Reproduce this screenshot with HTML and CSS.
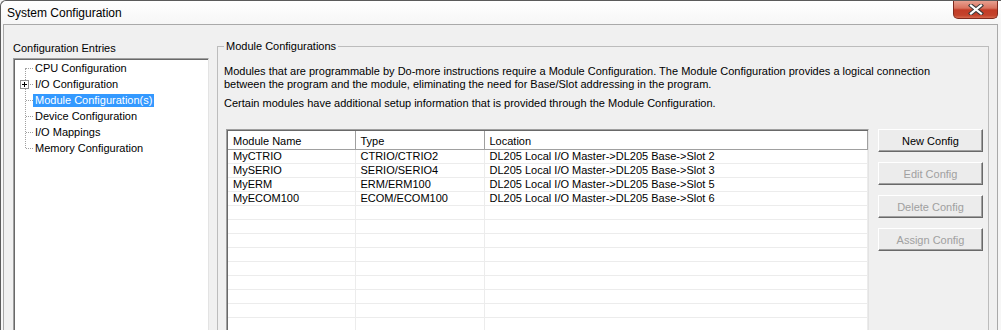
FILE: index.html
```html
<!DOCTYPE html>
<html lang="en">
    <head>
        <meta charset="utf-8">
        <title>System Configuration</title>
        <link rel="stylesheet" href="styles.css">
    </head>
    <body>
        <div class="window">
            <div class="titlebar">
                <span class="title">System Configuration</span>
                <span class="close">
                    <svg width="16" height="11" viewBox="0 0 16 11">
                        <path d="M3 1.5 L13 9.5 M13 1.5 L3 9.5" stroke="#3a3a3a" stroke-width="4.2" stroke-linecap="square"/>
                        <path d="M3 1.5 L13 9.5 M13 1.5 L3 9.5" stroke="#fff" stroke-width="2.2" stroke-linecap="square"/>
                    </svg>
                </span>
            </div>

            <div class="client">
                <div class="entries">
                    <div class="entries-label">Configuration Entries</div>
                    <div class="tree-box">
                        <ul class="tree">
                            <li><span class="tree-label">CPU Configuration</span></li>
                            <li>
                                <span class="expander">
                                    <svg width="9" height="9" viewBox="0 0 9 9">
                                        <rect x="0.5" y="0.5" width="8" height="8" fill="#fff" stroke="#919191"/>
                                        <path d="M2 4.5 H7 M4.5 2 V7" stroke="#000"/>
                                    </svg>
                                </span>
                                <span class="tree-label">I/O Configuration</span>
                            </li>
                            <li><span class="tree-label selected">Module Configuration(s)</span></li>
                            <li><span class="tree-label">Device Configuration</span></li>
                            <li><span class="tree-label">I/O Mappings</span></li>
                            <li><span class="tree-label">Memory Configuration</span></li>
                        </ul>
                    </div>
                </div>

                <fieldset class="group">
                    <legend>Module Configurations</legend>
                    <p>Modules that are programmable by Do-more instructions require a Module Configuration. The Module Configuration provides a logical connection between the program and the module, eliminating the need for Base/Slot addressing in the program.</p>
                    <p class="second">Certain modules have additional setup information that is provided through the Module Configuration.</p>

                    <div class="group-body">
                        <div class="list">
                            <table>
                                <colgroup>
                                    <col class="col-name">
                                    <col class="col-type">
                                    <col>
                                </colgroup>
                                <thead>
                                    <tr><th>Module Name</th><th>Type</th><th>Location</th></tr>
                                </thead>
                                <tbody>
                                    <tr><td>MyCTRIO</td><td>CTRIO/CTRIO2</td><td>DL205 Local I/O Master-&gt;DL205 Base-&gt;Slot 2</td></tr>
                                    <tr><td>MySERIO</td><td>SERIO/SERIO4</td><td>DL205 Local I/O Master-&gt;DL205 Base-&gt;Slot 3</td></tr>
                                    <tr><td>MyERM</td><td>ERM/ERM100</td><td>DL205 Local I/O Master-&gt;DL205 Base-&gt;Slot 5</td></tr>
                                    <tr><td>MyECOM100</td><td>ECOM/ECOM100</td><td>DL205 Local I/O Master-&gt;DL205 Base-&gt;Slot 6</td></tr>
                                    <tr><td></td><td></td><td></td></tr>
                                    <tr><td></td><td></td><td></td></tr>
                                    <tr><td></td><td></td><td></td></tr>
                                    <tr><td></td><td></td><td></td></tr>
                                    <tr><td></td><td></td><td></td></tr>
                                    <tr><td></td><td></td><td></td></tr>
                                    <tr><td></td><td></td><td></td></tr>
                                    <tr><td></td><td></td><td></td></tr>
                                    <tr><td></td><td></td><td></td></tr>
                                    <tr><td></td><td></td><td></td></tr>
                                    <tr><td></td><td></td><td></td></tr>
                                    <tr><td></td><td></td><td></td></tr>
                                    <tr><td></td><td></td><td></td></tr>
                                </tbody>
                            </table>
                        </div>
                        <div class="buttons">
                            <button class="btn">New Config</button>
                            <button class="btn" disabled>Edit Config</button>
                            <button class="btn" disabled>Delete Config</button>
                            <button class="btn" disabled>Assign Config</button>
                        </div>
                    </div>
                </fieldset>
            </div>
        </div>
    </body>
</html>
```

FILE: styles.css
```css
html,
body {
    margin: 0;
    height: 100%;
    overflow: hidden;
}

body {
    font-family: "Liberation Sans", Arial, sans-serif;
    font-size: 11px;
    color: #000;
    background: #f5f5f5;
}

.window {
    height: 330px;
    display: flex;
    flex-direction: column;
    border-left: 1px solid #5b5b5b;
    border-top: 1px solid #5b5b5b;
    border-radius: 6px 0 0 0;
    background: #f6f6f6;
    overflow: hidden;
}

/* title bar */
.titlebar {
    height: 23px;
    flex: none;
    display: flex;
    align-items: flex-start;
    padding-left: 6px;
    background: linear-gradient(#ffffff, #f6f6f6);
    border-radius: 6px 0 0 0;
}

.title {
    font-size: 12px;
    line-height: 14px;
    margin-top: 5px;
}

.close {
    margin-left: auto;
    margin-right: 3px;
    margin-top: -1px;
    width: 43px;
    height: 18px;
    display: flex;
    align-items: center;
    justify-content: center;
    border: 1px solid #7e2a1e;
    border-top: none;
    border-radius: 0 0 5px 5px;
    background: linear-gradient(#e9a697 0%, #d9735f 45%, #c23c27 55%, #c4432c 85%, #d66a4f 100%);
}

/* client area */
.client {
    flex: 1;
    display: flex;
    gap: 8px;
    margin: 0 3px 0 2px;
    padding: 15px 8px 0 9px;
    border: 1px solid #a9a9a9;
    border-bottom: none;
    background: #f0f0f0;
    min-height: 0;
}

.entries {
    width: 196px;
    flex: none;
    display: flex;
    flex-direction: column;
}

.entries-label {
    line-height: 13px;
    margin: 2px 0 3px;
}

.tree-box {
    flex: 1;
    background: #fff;
    border: 1px solid #a0a0a0;
    border-right-color: #e3e3e3;
    box-shadow: inset 1px 1px 0 #696969;
    padding-top: 1px;
    padding-left: 1px;
}

/* tree with dotted connector lines */
.tree {
    position: relative;
    list-style: none;
    margin: 0;
    padding: 0;
}

.tree::before {
    content: '';
    position: absolute;
    left: 10px;
    top: 8px;
    height: 80px;
    border-left: 1px dotted #a0a0a0;
}

.tree li {
    position: relative;
    height: 16px;
    display: flex;
    align-items: center;
    padding-left: 18px;
}

.tree li::before {
    content: '';
    position: absolute;
    left: 11px;
    top: 8px;
    width: 7px;
    border-top: 1px dotted #a0a0a0;
}

.expander {
    position: absolute;
    left: 5px;
    top: 4px;
    width: 9px;
    height: 9px;
    z-index: 1;
}

.expander svg {
    display: block;
}

.tree-label {
    line-height: 13px;
    padding: 0 2px;
    white-space: nowrap;
}

.tree-label.selected {
    background: #3399ff;
    color: #fff;
}

/* group box */
.group {
    flex: 1;
    min-width: 0;
    margin: 0;
    padding: 12px 5px 0 6px;
    border: 1px solid #bcbcbc;
    border-bottom: none;
}

.group legend {
    margin-left: 0;
    padding: 0 2px;
    line-height: 13px;
}

/* the static text control wraps narrower than the group box */
.group p {
    margin: 0;
    max-width: 735px;
    line-height: 13px;
}

.group p.second {
    margin-top: 6px;
}

.group-body {
    display: flex;
    gap: 9px;
    margin: 19px 0 0 2px;
}

/* list view */
.list {
    flex: 1;
    height: 220px;
    overflow: hidden;
    background: #fff;
    border: 1px solid #a0a0a0;
    border-right-color: #e3e3e3;
    box-shadow: inset 1px 1px 0 #696969;
    padding: 1px 0 0 1px;
}

.list table {
    width: 100%;
    border-collapse: collapse;
    table-layout: fixed;
}

.col-name {
    width: 127px;
}

.col-type {
    width: 129px;
}

.list th {
    height: 17px;
    padding: 1px 5px 0;
    text-align: left;
    font-weight: normal;
    background: #fff;
    border-right: 1px solid #a0a0a0;
    border-bottom: 1px solid #a0a0a0;
    white-space: nowrap;
}

.list td {
    height: 13px;
    padding: 0 5px;
    line-height: 13px;
    border-right: 1px solid #ececec;
    border-bottom: 1px solid #ececec;
    white-space: nowrap;
}

/* buttons */
.buttons {
    width: 105px;
    flex: none;
    display: flex;
    flex-direction: column;
    gap: 10px;
}

.btn {
    height: 23px;
    padding: 0;
    font: inherit;
    color: #000;
    background: #ececec;
    border: 1px solid;
    border-color: #fff #696969 #696969 #fff;
    box-shadow: inset -1px -1px 0 #a0a0a0;
}

.btn:disabled {
    color: #a0a0a0;
}
```
